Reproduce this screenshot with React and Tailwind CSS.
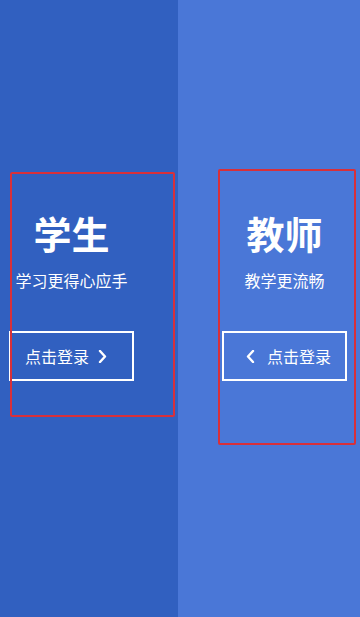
import React from "react";

const font = { fontFamily: '"Noto Sans CJK SC", "Noto Sans", sans-serif' };

function Chevron({ dir = "right" }) {
  const points = dir === "right" ? "2,1 7,6.5 2,12" : "7,1 2,6.5 7,12";
  return (
    <svg width="9" height="13" viewBox="0 0 9 13" fill="none" className="shrink-0">
      <polyline points={points} stroke="white" strokeWidth="2.4" strokeLinecap="round" strokeLinejoin="round" />
    </svg>
  );
}

function Panel({ title, subtitle, side, className, box }) {
  return (
    <div className={`relative flex-1 min-h-[617px] ${className}`}>
      <div className={`flex flex-col items-center pt-[213px] w-[125px] ${side === "left" ? "ml-[9px]" : "ml-[44px]"}`}>
        <h1 className="text-[38px] leading-[40px] font-bold text-white">{title}</h1>
        <p className="mt-[15px] text-[16px] leading-[24px] text-white">{subtitle}</p>
        <button
          type="button"
          className={`mt-[39px] flex h-[50px] w-[125px] items-center border-2 border-white text-[16px] text-white ${
            side === "left" ? "pl-[14px] gap-[9px]" : "pl-[22px] gap-[12px]"
          }`}
        >
          {side === "right" && <Chevron dir="left" />}
          <span>点击登录</span>
          {side === "left" && <Chevron dir="right" />}
        </button>
      </div>
      <div className={`pointer-events-none absolute border-[2.5px] border-[#d8303a] rounded-[2px] ${box}`} />
    </div>
  );
}

export default function App() {
  return (
    <div className="flex w-[360px] h-[617px] overflow-hidden" style={font}>
      <Panel
        title="学生"
        subtitle="学习更得心应手"
        side="left"
        className="w-[178px] flex-none bg-[#3160c0]"
        box="left-[10px] top-[172px] w-[165px] h-[245px]"
      />
      <Panel
        title="教师"
        subtitle="教学更流畅"
        side="right"
        className="bg-[#4a77d7]"
        box="left-[40px] top-[169px] w-[138px] h-[276px]"
      />
    </div>
  );
}
